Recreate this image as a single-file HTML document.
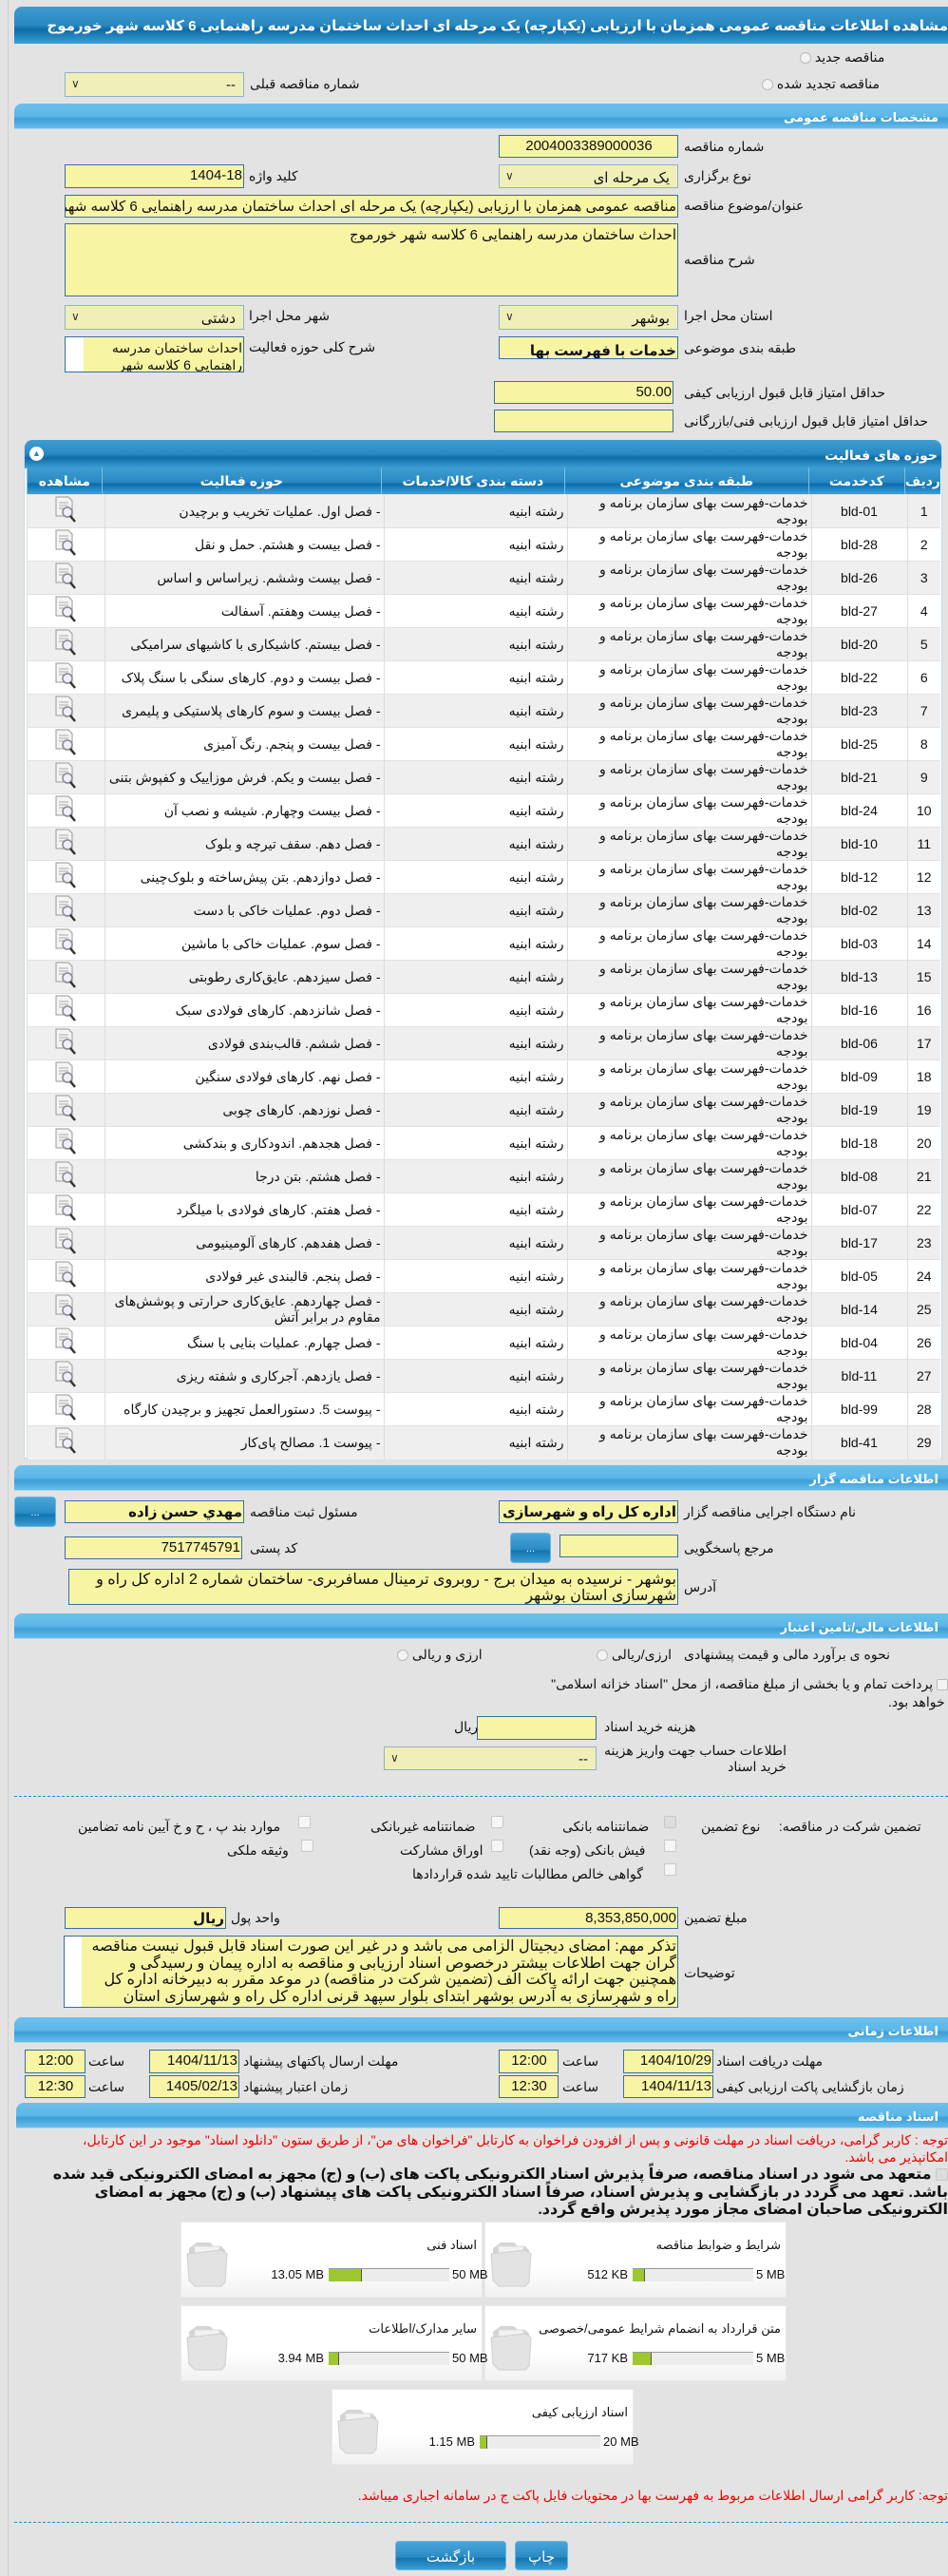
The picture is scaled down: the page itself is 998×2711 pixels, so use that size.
<!DOCTYPE html>
<html><head><meta charset="utf-8">
<style>
*{box-sizing:border-box;margin:0;padding:0}
body{width:998px;height:2711px;background:#e3e3e3;font-family:"Liberation Sans","DejaVu Sans",sans-serif;font-size:14px;color:#111;position:relative;overflow:hidden}
.a{position:absolute}
.vl{position:absolute;left:8px;top:0;width:1px;height:2711px;background:#cfcfcf}
.title{left:15px;top:7px;width:983px;height:39px;border-radius:8px 0 0 0;background:linear-gradient(#3d9cd2 0%,#2a88c0 50%,#0c6ba6 62%,#3c9fd6 100%);color:#fff;font-weight:bold;font-size:15px;direction:rtl;text-align:right;padding:11px 0 0 0;white-space:nowrap;overflow:hidden}
.sec{left:15px;width:983px;height:27px;border-radius:8px 0 0 0;background:linear-gradient(#6cc0ec 0%,#5db7e8 50%,#3b9fd8 62%,#68bdea 100%);color:#fff;font-weight:bold;font-size:13px;direction:rtl;text-align:right;padding:7px 10px 0 0;border-bottom:1px solid #a9d6f0}
.in{position:absolute;background:#f7f4a4;border:1px solid #3a6ea5;direction:rtl;text-align:right;padding:2px 1px 0 2px;white-space:nowrap;overflow:hidden;font-size:15px}
.sel{position:absolute;background:#f1efb8;border:1px solid #8fb0cf;direction:rtl;text-align:right;padding:4px 8px 0 2px;white-space:nowrap;overflow:hidden;font-size:15px}
.sel:after{content:"\2228";position:absolute;left:6px;top:4px;font-size:12px;color:#333}
.l{position:absolute;direction:rtl;white-space:nowrap;font-size:14px}
.btn{position:absolute;border-radius:4px;background:linear-gradient(#4aa6da 0%,#2a8bc4 55%,#1374b0 60%,#3a9dd4 100%);color:#fff;text-align:center;border:1px solid #6ab6e0}
table{border-collapse:collapse;direction:rtl}
.tb{position:absolute;left:28px;top:492px;width:962px;background:#fff}
.tb th{height:28px;color:#fff;font-size:14px;font-weight:bold;background:linear-gradient(#3f9dd2 0%,#2889c2 55%,#0d6ca8 62%,#3f9fd6 100%);border-left:1px solid #7fbde2}
.tb td{height:35px;border-left:1px solid #ddd;border-top:1px solid #e2e2e2;font-size:14px;padding:0 3px;vertical-align:middle;line-height:17px;overflow:hidden}
.tb tr:nth-child(odd) td{background:#efefef}
.card{position:absolute;width:318px;height:80px;background:linear-gradient(#fff 60%,#f1f1f1);border:1px solid #e9e9e9}
.card .t{position:absolute;right:5px;top:16px;direction:rtl;font-size:13px;white-space:nowrap}
.card .bar{position:absolute;left:155px;top:48px;width:127px;height:14px;background:#ececec;border-top:1px solid #999}
.card .bar i{position:absolute;left:0;top:0;height:13px;background:#9dc832;border-right:1px solid #555}
.card .mx{position:absolute;left:285px;top:47px;font-size:13px;white-space:nowrap}
.card .cu{position:absolute;right:166px;top:47px;font-size:13px;white-space:nowrap}
.rad{display:inline-block;width:12px;height:12px;border:1px solid #bbb;border-radius:50%;background:#f3f3f3;vertical-align:middle}
.cb{position:absolute;width:13px;height:13px;border:1px solid #c8c8c8;background:#f6f6f6;border-radius:2px}
.red{color:#e00;direction:rtl;white-space:nowrap}
</style></head><body>
<div class="vl"></div>
<div class="a title">مشاهده اطلاعات مناقصه عمومی همزمان با ارزیابی (یکپارچه) یک مرحله ای احداث ساختمان مدرسه راهنمایی 6 کلاسه شهر خورموج</div>

<div class="l" style="left:842px;top:52px">مناقصه جدید <span class="rad"></span></div>
<div class="l" style="left:802px;top:80px">مناقصه تجدید شده <span class="rad"></span></div>
<div class="sel" style="left:68px;top:76px;width:189px;height:26px">--</div>
<div class="l" style="left:263px;top:80px">شماره مناقصه قبلی</div>

<div class="a sec" style="top:109px">مشخصات مناقصه عمومی</div>
<div class="in" style="left:525px;top:142px;width:189px;height:24px;text-align:center">2004003389000036</div>
<div class="l" style="left:720px;top:146px">شماره مناقصه</div>
<div class="sel" style="left:525px;top:173px;width:189px;height:25px">یک مرحله ای</div>
<div class="l" style="left:720px;top:177px">نوع برگزاری</div>
<div class="in" style="left:68px;top:173px;width:189px;height:25px">1404-18</div>
<div class="l" style="left:262px;top:177px">کلید واژه</div>
<div class="in" style="left:68px;top:205px;width:646px;height:24px">مناقصه عمومی همزمان با ارزیابی (یکپارچه) یک مرحله ای احداث ساختمان مدرسه راهنمایی 6 کلاسه شهر خورموج</div>
<div class="l" style="left:720px;top:208px">عنوان/موضوع مناقصه</div>
<div class="in" style="left:68px;top:235px;width:646px;height:77px;font-size:15px">احداث ساختمان مدرسه راهنمایی 6 کلاسه شهر خورموج</div>
<div class="l" style="left:720px;top:265px">شرح مناقصه</div>
<div class="sel" style="left:525px;top:321px;width:189px;height:26px">بوشهر</div>
<div class="l" style="left:720px;top:324px">استان محل اجرا</div>
<div class="sel" style="left:68px;top:321px;width:189px;height:26px">دشتی</div>
<div class="l" style="left:262px;top:324px">شهر محل اجرا</div>
<div class="in" style="left:525px;top:354px;width:189px;height:24px;font-weight:bold;padding-top:5px">خدمات با فهرست بها</div>
<div class="l" style="left:720px;top:358px">طبقه بندی موضوعی</div>
<div class="in" style="left:68px;top:354px;width:189px;height:38px;font-size:14px;line-height:18px;white-space:normal;padding-left:20px;background:linear-gradient(90deg,#fff 0,#fff 19px,#f7f4a4 19px)">احداث ساختمان مدرسه راهنمایی 6 کلاسه شهر</div>
<div class="l" style="left:262px;top:357px">شرح کلی حوزه فعالیت</div>
<div class="in" style="left:520px;top:401px;width:189px;height:24px">50.00</div>
<div class="l" style="left:720px;top:405px">حداقل امتیاز قابل قبول ارزیابی کیفی</div>
<div class="in" style="left:520px;top:431px;width:189px;height:24px"></div>
<div class="l" style="left:720px;top:435px">حداقل امتیاز قابل قبول ارزیابی فنی/بازرگانی</div>

<div class="a" style="left:25px;top:463px;width:967px;height:1072px;border:1px solid #c9d9e6;border-radius:8px 8px 0 0;background:#fff"></div>
<div class="a" style="left:26px;top:463px;width:965px;height:30px;border-radius:8px 8px 0 0;background:linear-gradient(#3f9dd2 0%,#2889c2 50%,#0d6ca8 62%,#3f9fd6 100%);color:#fff;font-weight:bold;direction:rtl;padding:8px 4px 0 0;font-size:14px">حوزه های فعالیت</div>
<div class="a" style="left:31px;top:470px;width:15px;height:15px;border-radius:50%;background:#fff;color:#2a88c0;font-size:9px;text-align:center;line-height:15px">▲</div>
<table class="tb">
<tr><th style="width:35px">ردیف</th><th style="width:101px">کدخدمت</th><th style="width:257px">طبقه بندی موضوعی</th><th style="width:193px">دسته بندی کالا/خدمات</th><th style="width:294px">حوزه فعالیت</th><th>مشاهده</th></tr>
</table>
<div id="rows"></div>
<script>
var d=[["bld-01","فصل اول. عملیات تخریب و برچیدن"],["bld-28","فصل بیست و هشتم. حمل و نقل"],["bld-26","فصل بیست وششم. زیراساس و اساس"],["bld-27","فصل بیست وهفتم. آسفالت"],["bld-20","فصل بیستم. کاشیکاری با کاشیهای سرامیکی"],["bld-22","فصل بیست و دوم. کارهای سنگی با سنگ پلاک"],["bld-23","فصل بیست و سوم کارهای پلاستیکی و پلیمری"],["bld-25","فصل بیست و پنجم. رنگ آمیزی"],["bld-21","فصل بیست و یکم. فرش موزاییک و کفپوش بتنی"],["bld-24","فصل بیست وچهارم. شیشه و نصب آن"],["bld-10","فصل دهم. سقف تیرچه و بلوک"],["bld-12","فصل دوازدهم. بتن پیش‌ساخته و بلوک‌چینی"],["bld-02","فصل دوم. عملیات خاکی با دست"],["bld-03","فصل سوم. عملیات خاکی با ماشین"],["bld-13","فصل سیزدهم. عایق‌کاری رطوبتی"],["bld-16","فصل شانزدهم. کارهای فولادی سبک"],["bld-06","فصل ششم. قالب‌بندی فولادی"],["bld-09","فصل نهم. کارهای فولادی سنگین"],["bld-19","فصل نوزدهم. کارهای چوبی"],["bld-18","فصل هجدهم. اندودکاری و بندکشی"],["bld-08","فصل هشتم. بتن درجا"],["bld-07","فصل هفتم. کارهای فولادی با میلگرد"],["bld-17","فصل هفدهم. کارهای آلومینیومی"],["bld-05","فصل پنجم. قالبندی غیر فولادی"],["bld-14","فصل چهاردهم. عایق‌کاری حرارتی و پوشش‌های مقاوم در برابر آتش"],["bld-04","فصل چهارم. عملیات بنایی با سنگ"],["bld-11","فصل یازدهم. آجرکاری و شفته ریزی"],["bld-99","پیوست 5. دستورالعمل تجهیز و برچیدن کارگاه"],["bld-41","پیوست 1. مصالح پای‌کار"]];
var ic='<svg width="26" height="30" viewBox="0 0 26 30"><path d="M3 2h13l4 4v16H3z" fill="#f4f4f4" stroke="#999"/><path d="M6 8h10M6 11h10M6 14h7" stroke="#aaa"/><circle cx="15" cy="18" r="5" fill="#eef" stroke="#888" stroke-width="1.5"/><path d="M18 22l5 6" stroke="#333" stroke-width="2.5"/></svg>';
var h='<table class="tb" style="top:520px">';
d.forEach(function(r,i){h+='<tr><td style="width:35px;text-align:center">'+(i+1)+'</td><td style="width:101px;text-align:center">'+r[0]+'</td><td style="width:257px">خدمات-فهرست بهای سازمان برنامه و<br>بودجه</td><td style="width:193px">رشته ابنیه</td><td style="width:294px">- '+r[1]+'</td><td style="text-align:center">'+ic+'</td></tr>'});
h+='</table>';document.getElementById('rows').innerHTML=h;
</script>

<div class="a sec" style="top:1542px">اطلاعات مناقصه گزار</div>
<div class="in" style="left:525px;top:1579px;width:189px;height:24px;font-weight:bold">اداره کل راه و شهرسازی استان بوشهر</div>
<div class="l" style="left:720px;top:1583px">نام دستگاه اجرایی مناقصه گزار</div>
<div class="in" style="left:68px;top:1579px;width:189px;height:24px;font-weight:bold">مهدي حسن زاده</div>
<div class="l" style="left:263px;top:1583px">مسئول ثبت مناقصه</div>
<div class="btn" style="left:15px;top:1575px;width:44px;height:32px;padding-top:10px;font-size:11px">...</div>
<div class="in" style="left:589px;top:1615px;width:125px;height:24px"></div>
<div class="l" style="left:720px;top:1621px">مرجع پاسخگویی</div>
<div class="btn" style="left:537px;top:1613px;width:43px;height:32px;padding-top:10px;font-size:11px">...</div>
<div class="in" style="left:68px;top:1617px;width:187px;height:24px">7517745791</div>
<div class="l" style="left:263px;top:1621px">کد پستی</div>
<div class="in" style="left:72px;top:1651px;width:642px;height:38px;font-size:16px;white-space:normal;line-height:17px">بوشهر - نرسیده به میدان برج - روبروی ترمینال مسافربری- ساختمان شماره 2 اداره کل راه و شهرسازی استان بوشهر</div>
<div class="l" style="left:720px;top:1662px">آدرس</div>

<div class="a sec" style="top:1698px">اطلاعات مالی/تامین اعتبار</div>
<div class="l" style="left:720px;top:1733px">نحوه ی برآورد مالی و قیمت پیشنهادی</div>
<div class="l" style="left:628px;top:1733px">ارزی/ریالی <span class="rad"></span></div>
<div class="l" style="left:418px;top:1733px">ارزی و ریالی <span class="rad"></span></div>
<div class="l" style="right:0;top:1764px"><span class="rad" style="border-radius:2px"></span> پرداخت تمام و یا بخشی از مبلغ مناقصه، از محل "اسناد خزانه اسلامی"</div>
<div class="l" style="left:935px;top:1783px">خواهد بود.</div>
<div class="in" style="left:502px;top:1806px;width:126px;height:25px"></div>
<div class="l" style="left:636px;top:1809px">هزینه خرید اسناد</div>
<div class="l" style="left:478px;top:1809px">ریال</div>
<div class="sel" style="left:404px;top:1838px;width:224px;height:25px">--</div>
<div class="l" style="left:636px;top:1834px;line-height:17px">اطلاعات حساب جهت واریز هزینه<br>خرید اسناد</div>
<div class="a" style="left:15px;top:1890px;width:983px;border-top:1px dashed #2f8ac3"></div>

<div class="l" style="left:738px;top:1914px">تضمین شرکت در مناقصه:&nbsp;&nbsp;&nbsp;&nbsp; نوع تضمین</div>
<div class="l" style="left:592px;top:1914px">ضمانتنامه بانکی</div><div class="cb" style="left:699px;top:1911px;background:#ddd"></div>
<div class="l" style="left:390px;top:1914px">ضمانتنامه غیربانکی</div><div class="cb" style="left:517px;top:1911px"></div>
<div class="l" style="left:82px;top:1914px">موارد بند پ ، ح و خ آیین نامه تضامین</div><div class="cb" style="left:314px;top:1911px"></div>
<div class="l" style="left:557px;top:1939px">فیش بانکی (وجه نقد)</div><div class="cb" style="left:699px;top:1936px"></div>
<div class="l" style="left:421px;top:1939px">اوراق مشارکت</div><div class="cb" style="left:517px;top:1936px"></div>
<div class="l" style="left:239px;top:1939px">وثیقه ملکی</div><div class="cb" style="left:317px;top:1936px"></div>
<div class="l" style="left:434px;top:1964px">گواهی خالص مطالبات تایید شده قراردادها</div><div class="cb" style="left:699px;top:1961px"></div>

<div class="in" style="left:525px;top:2007px;width:189px;height:23px">8,353,850,000</div>
<div class="l" style="left:720px;top:2010px">مبلغ تضمین</div>
<div class="in" style="left:68px;top:2007px;width:170px;height:23px;font-weight:bold">ریال</div>
<div class="l" style="left:243px;top:2010px">واحد پول</div>
<div class="in" style="left:67px;top:2037px;width:647px;height:76px;font-size:16px;white-space:normal;line-height:17.5px;padding-left:19px;background:linear-gradient(90deg,#fff 0,#fff 18px,#f7f4a4 18px)">تذکر مهم: امضای دیجیتال الزامی می باشد و در غیر این صورت اسناد قابل قبول نیست مناقصه گران جهت اطلاعات بیشتر درخصوص اسناد ارزیابی و مناقصه به اداره پیمان و رسیدگی و همچنین جهت ارائه پاکت الف (تضمین شرکت در مناقصه) در موعد مقرر به دبیرخانه اداره کل راه و شهرسازی به آدرس بوشهر ابتدای بلوار سپهد قرنی اداره کل راه و شهرسازی استان بوشهر ساختمان</div>
<div class="l" style="left:720px;top:2068px">توضیحات</div>

<div class="a sec" style="top:2123px">اطلاعات زمانی</div>
<div class="in" style="left:656px;top:2157px;width:95px;height:25px">1404/10/29</div>
<div class="l" style="left:754px;top:2161px">مهلت دریافت اسناد</div>
<div class="in" style="left:525px;top:2157px;width:63px;height:25px;text-align:center">12:00</div>
<div class="l" style="left:592px;top:2161px">ساعت</div>
<div class="in" style="left:157px;top:2157px;width:95px;height:25px">1404/11/13</div>
<div class="l" style="left:256px;top:2161px">مهلت ارسال پاکتهای پیشنهاد</div>
<div class="in" style="left:26px;top:2157px;width:64px;height:25px;text-align:center">12:00</div>
<div class="l" style="left:93px;top:2161px">ساعت</div>
<div class="in" style="left:656px;top:2184px;width:95px;height:24px">1404/11/13</div>
<div class="l" style="left:754px;top:2188px">زمان بازگشایی پاکت ارزیابی کیفی</div>
<div class="in" style="left:525px;top:2184px;width:63px;height:24px;text-align:center">12:30</div>
<div class="l" style="left:592px;top:2188px">ساعت</div>
<div class="in" style="left:157px;top:2184px;width:95px;height:24px">1405/02/13</div>
<div class="l" style="left:256px;top:2188px">زمان اعتبار پیشنهاد</div>
<div class="in" style="left:26px;top:2184px;width:64px;height:24px;text-align:center">12:30</div>
<div class="l" style="left:93px;top:2188px">ساعت</div>

<div class="a sec" style="top:2213px;left:17px;width:981px">اسناد مناقصه</div>
<div class="a red" style="right:0;top:2244px;font-size:14px">توجه : کاربر گرامی، دریافت اسناد در مهلت قانونی و پس از افزودن فراخوان به کارتابل "فراخوان های من"، از طریق ستون "دانلود اسناد" موجود در این کارتابل،</div>
<div class="a red" style="right:0;top:2262px;font-size:14px">امکانپذیر می باشد.</div>
<div class="a" style="left:15px;top:2280px;width:983px;direction:rtl;font-weight:bold;font-size:16px;line-height:18.5px"><span class="cb" style="position:relative;display:inline-block;background:#ddd;top:2px"></span> متعهد می شود در اسناد مناقصه، صرفاً پذیرش اسناد الکترونیکی پاکت های (ب) و (ج) مجهز به امضای الکترونیکی قید شده باشد. تعهد می گردد در بازگشایی و پذیرش اسناد، صرفاً اسناد الکترونیکی پاکت های پیشنهاد (ب) و (ج) مجهز به امضای الکترونیکی صاحبان امضای مجاز مورد پذیرش واقع گردد.</div>

<svg width="0" height="0" style="position:absolute"><defs><g id="fd"><path d="M4 10l8-6h14l4 4h8l4 4v30l-4 6H12l-8-6z" fill="#d5d5d5"/><path d="M10 8h26v32H10z" fill="#f2f2f2" stroke="#ddd"/><path d="M2 16l36-4 6 4-2 30-4 4H10l-6-6z" fill="#e3e3e3" stroke="#cfcfcf"/></g></defs></svg>
<div class="card" style="left:510px;top:2338px"><svg class="a" style="left:4px;top:17px" width="50" height="52"><use href="#fd"/></svg><div class="t">شرایط و ضوابط مناقصه</div><div class="bar"><i style="width:13px"></i></div><div class="mx">5 MB</div><div class="cu">512 KB</div></div>
<div class="card" style="left:190px;top:2338px"><svg class="a" style="left:4px;top:17px" width="50" height="52"><use href="#fd"/></svg><div class="t">اسناد فنی</div><div class="bar"><i style="width:35px"></i></div><div class="mx">50 MB</div><div class="cu">13.05 MB</div></div>
<div class="card" style="left:510px;top:2426px"><svg class="a" style="left:4px;top:17px" width="50" height="52"><use href="#fd"/></svg><div class="t">متن قرارداد به انضمام شرایط عمومی/خصوصی</div><div class="bar"><i style="width:20px"></i></div><div class="mx">5 MB</div><div class="cu">717 KB</div></div>
<div class="card" style="left:190px;top:2426px"><svg class="a" style="left:4px;top:17px" width="50" height="52"><use href="#fd"/></svg><div class="t">سایر مدارک/اطلاعات</div><div class="bar"><i style="width:11px"></i></div><div class="mx">50 MB</div><div class="cu">3.94 MB</div></div>
<div class="card" style="left:349px;top:2514px"><svg class="a" style="left:4px;top:17px" width="50" height="52"><use href="#fd"/></svg><div class="t">اسناد ارزیابی کیفی</div><div class="bar"><i style="width:8px"></i></div><div class="mx">20 MB</div><div class="cu">1.15 MB</div></div>

<div class="a red" style="right:0;top:2618px;font-size:14px">توجه: کاربر گرامی ارسال اطلاعات مربوط به فهرست بها در محتویات فایل پاکت ج در سامانه اجباری میباشد.</div>
<div class="a" style="left:15px;top:2654px;width:983px;border-top:1px dashed #2f8ac3"></div>
<div class="btn" style="left:416px;top:2674px;width:117px;height:31px;padding-top:7px;font-size:15px">بازگشت</div>
<div class="btn" style="left:542px;top:2674px;width:56px;height:31px;padding-top:7px;font-size:15px">چاپ</div>
</body></html>
